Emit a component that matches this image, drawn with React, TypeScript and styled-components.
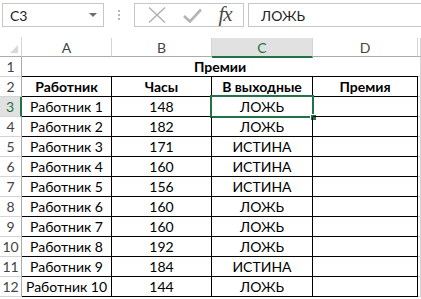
import { Fragment } from 'react';
import styled, { createGlobalStyle } from 'styled-components';

/* ── Globals ── */
const GlobalStyle = createGlobalStyle`
  html, body { margin: 0; padding: 0; background: #fff; }
  body {
    font-family: Lato, 'Liberation Sans', 'Noto Sans', sans-serif;
    font-size: 14px;
    color: #000;
    overflow: hidden;
  }
`;

const GREEN = '#217346';

/* ══════════════════════════════════════
   FORMULA BAR — name box, grip, fx, input
   ══════════════════════════════════════ */
const FormulaBar = styled.div`
  height: 37px;
  box-sizing: border-box;
  display: flex;
  align-items: flex-start;
  padding: 3px 0 0 2px;
`;

const NameBox = styled.div`
  width: 102px;
  height: 24px;
  box-sizing: border-box;
  border: 1px solid #c6c6c6;
  display: flex;
  align-items: center;
  justify-content: space-between;
  padding: 0 4px 0 7px;
  color: #222;
  font-size: 14px;
`;

const Caret = styled.span`
  width: 0; height: 0;
  border-left: 4px solid transparent;
  border-right: 4px solid transparent;
  border-top: 4px solid #6d6d6d;
  margin-right: 2px;
`;

const Grip = styled.div`
  width: 30px;
  height: 24px;
  display: flex;
  flex-direction: column;
  align-items: center;
  justify-content: center;
  gap: 2px;

  span { width: 2px; height: 2px; background: #b5b5b5; }
`;

const FxBox = styled.div`
  width: 110px;
  height: 24px;
  box-sizing: border-box;
  border: 1px solid #c6c6c6;
  display: flex;
  align-items: center;
  padding-left: 8px;
`;

const IconSlot = styled.span<{ $w: number }>`
  width: ${p => p.$w}px;
  display: flex;
  align-items: center;
  justify-content: center;
`;

const FxLabel = styled.span`
  font-family: 'Liberation Serif', 'DejaVu Serif', serif;
  font-style: italic;
  font-size: 21px;
  color: #4a4a4a;
  letter-spacing: -1px;
  line-height: 1;
  margin-top: -2px;
`;

const FormulaInput = styled.div`
  flex: 1;
  height: 24px;
  margin-left: 4px;
  box-sizing: border-box;
  border: 1px solid #c6c6c6;
  border-right: none;
  display: flex;
  align-items: center;
  padding-left: 12px;
  font-size: 14px;
  color: #222;
`;

/* ══════════════════════════════════════
   SHEET GRID
   ══════════════════════════════════════ */
const Sheet = styled.div`
  display: grid;
  grid-template-columns: 22px 90px 100px 101px 105px 3px;
  grid-auto-rows: 20px;
`;

const Corner = styled.div`
  box-sizing: border-box;
  border-right: 1px solid #d4d4d4;
  border-bottom: 1px solid #ababab;
  position: relative;

  &::after {
    content: '';
    position: absolute;
    right: 3px; bottom: 3px;
    border-left: 8px solid transparent;
    border-bottom: 8px solid #d9d9d9;
  }
`;

const ColHeader = styled.div<{ $active?: boolean }>`
  box-sizing: border-box;
  margin-top: 1px;
  display: flex;
  align-items: center;
  justify-content: center;
  color: ${p => p.$active ? GREEN : '#444'};
  background: ${p => p.$active ? '#e1e1e1' : '#fff'};
  border-right: 1px solid #d4d4d4;
  border-bottom: ${p => p.$active ? `2px solid ${GREEN}` : '1px solid #ababab'};
  margin-bottom: ${p => p.$active ? '-1px' : '0'};
`;

const RowHeader = styled.div<{ $active?: boolean }>`
  box-sizing: border-box;
  display: flex;
  align-items: center;
  justify-content: center;
  color: ${p => p.$active ? GREEN : '#444'};
  background: ${p => p.$active ? '#e1e1e1' : '#fff'};
  border-right: ${p => p.$active ? `2px solid ${GREEN}` : '1px solid #ababab'};
  border-bottom: 1px solid #d4d4d4;
`;

const Title = styled.div`
  grid-column: span 4;
  box-sizing: border-box;
  display: flex;
  align-items: center;
  justify-content: center;
  font-weight: 700;
  border-bottom: 1px solid #000;
`;

const Cell = styled.div<{ $bold?: boolean; $grid?: boolean }>`
  box-sizing: border-box;
  display: flex;
  align-items: center;
  justify-content: center;
  white-space: nowrap;
  font-weight: ${p => p.$bold ? 700 : 400};
  border-right: 1px solid ${p => p.$grid ? '#d4d4d4' : '#000'};
  border-bottom: 1px solid ${p => p.$grid ? '#d4d4d4' : '#000'};
  position: relative;
`;

/* selected cell frame + fill handle */
const Selection = styled.span`
  position: absolute;
  left: -2px; top: -2px; right: -2px; bottom: -2px;
  border: 2px solid ${GREEN};
  pointer-events: none;

  &::after {
    content: '';
    position: absolute;
    right: -5px; bottom: -5px;
    width: 5px; height: 5px;
    background: ${GREEN};
    border: 1px solid #fff;
  }
`;

const rows: [string, number, string][] = [
  ['Работник 1', 148, 'ЛОЖЬ'],
  ['Работник 2', 182, 'ЛОЖЬ'],
  ['Работник 3', 171, 'ИСТИНА'],
  ['Работник 4', 160, 'ИСТИНА'],
  ['Работник 5', 156, 'ИСТИНА'],
  ['Работник 6', 160, 'ЛОЖЬ'],
  ['Работник 7', 160, 'ЛОЖЬ'],
  ['Работник 8', 192, 'ЛОЖЬ'],
  ['Работник 9', 184, 'ИСТИНА'],
  ['Работник 10', 144, 'ЛОЖЬ'],
];

export default function App() {
  return (
    <>
      <GlobalStyle />
      <FormulaBar>
        <NameBox>C3<Caret /></NameBox>
        <Grip><span /><span /><span /></Grip>
        <FxBox>
          <IconSlot $w={28}>
            <svg width="18" height="16" viewBox="0 0 18 16">
              <path d="M1 0.5 L17 15.5 M17 0.5 L1 15.5" stroke="#b0b0b0" strokeWidth="1.4" fill="none" />
            </svg>
          </IconSlot>
          <IconSlot $w={42}>
            <svg width="19" height="15" viewBox="0 0 19 15">
              <path d="M1 8 L7 13.5 L18 1.5" stroke="#b4b4b4" strokeWidth="2.6" fill="none" />
            </svg>
          </IconSlot>
          <IconSlot $w={24}><FxLabel>fx</FxLabel></IconSlot>
        </FxBox>
        <FormulaInput>ЛОЖЬ</FormulaInput>
      </FormulaBar>

      <Sheet>
        <Corner />
        <ColHeader>A</ColHeader>
        <ColHeader>B</ColHeader>
        <ColHeader $active>C</ColHeader>
        <ColHeader>D</ColHeader>
        <ColHeader />

        <RowHeader>1</RowHeader>
        <Title>Премии</Title>
        <Cell $grid />

        <RowHeader>2</RowHeader>
        <Cell $bold>Работник</Cell>
        <Cell $bold>Часы</Cell>
        <Cell $bold>В выходные</Cell>
        <Cell $bold>Премия</Cell>
        <Cell $grid />

        {rows.map(([name, hours, weekend], i) => (
          <Fragment key={i}>
            <RowHeader $active={i === 0}>{i + 3}</RowHeader>
            <Cell>{name}</Cell>
            <Cell>{hours}</Cell>
            <Cell>
              {weekend}
              {i === 0 && <Selection />}
            </Cell>
            <Cell />
            <Cell $grid />
          </Fragment>
        ))}
      </Sheet>
    </>
  );
}
